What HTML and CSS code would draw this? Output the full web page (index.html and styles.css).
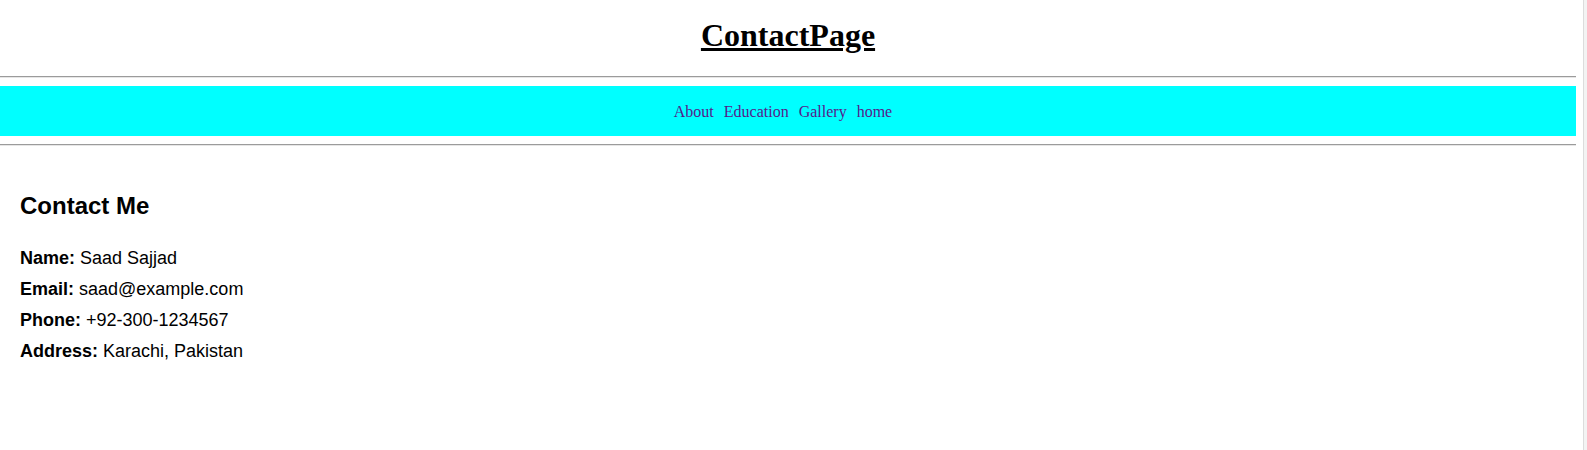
FILE: index.html
```html
<!DOCTYPE html>
<html lang="en">
<head>
<meta charset="utf-8">
<title>ContactPage</title>
<link rel="stylesheet" href="styles.css">
</head>
<body>
<div class="page">
  <header class="site-header">
    <h1 class="site-title">ContactPage</h1>
  </header>
  <hr class="rule rule-top">
  <nav class="nav">
    <a class="nav-link" href="#">About</a>
    <a class="nav-link" href="#">Education</a>
    <a class="nav-link" href="#">Gallery</a>
    <a class="nav-link" href="#">home</a>
  </nav>
  <hr class="rule rule-bottom">
  <main class="contact">
    <h2 class="contact-title">Contact Me</h2>
    <p class="contact-line"><strong>Name:</strong> Saad Sajjad</p>
    <p class="contact-line"><strong>Email:</strong> saad@example.com</p>
    <p class="contact-line"><strong>Phone:</strong> +92-300-1234567</p>
    <p class="contact-line"><strong>Address:</strong> Karachi, Pakistan</p>
  </main>
</div>
<div class="scroll-edge"></div>
</body>
</html>
```
FILE: styles.css
```css
html, body {
  margin: 0;
  padding: 0;
  background: #ffffff;
}

body {
  font-family: "Liberation Serif", "Times New Roman", serif;
  color: #000;
  height: 450px;
  overflow: hidden;
}

.page {
  width: 1576px;
}

.site-header {
  padding-top: 17px;
}

.site-title {
  margin: 0;
  font-size: 32px;
  line-height: 37px;
  font-weight: bold;
  text-align: center;
  text-decoration: underline;
}

.rule {
  margin: 0;
  border: 0;
  height: 0;
  border-top: 1px solid #9b9b9b;
  border-bottom: 1px solid #e6e6e6;
}

.rule-top {
  margin-top: 22px;
}

.nav {
  margin-top: 8px;
  height: 50px;
  box-sizing: border-box;
  padding-top: 17px;
  background: #00ffff;
  display: flex;
  justify-content: center;
  font-size: 16px;
  line-height: 18px;
}

.nav-link {
  color: #551a8b;
  text-decoration: none;
  margin-right: 10px;
}

.rule-bottom {
  margin-top: 8px;
}

.contact {
  padding: 20px;
  font-family: "Liberation Sans", Arial, sans-serif;
}

.contact-title {
  margin: 26px 0 23px;
  font-size: 24px;
  line-height: 28px;
  font-weight: bold;
}

.contact-line {
  margin: 0;
  font-size: 18px;
  line-height: 31px;
}

.scroll-edge {
  position: fixed;
  top: 0;
  right: 0;
  width: 3px;
  height: 100%;
  border-left: 1px solid #dcdcdc;
  background: #f3f3f3;
}
```
